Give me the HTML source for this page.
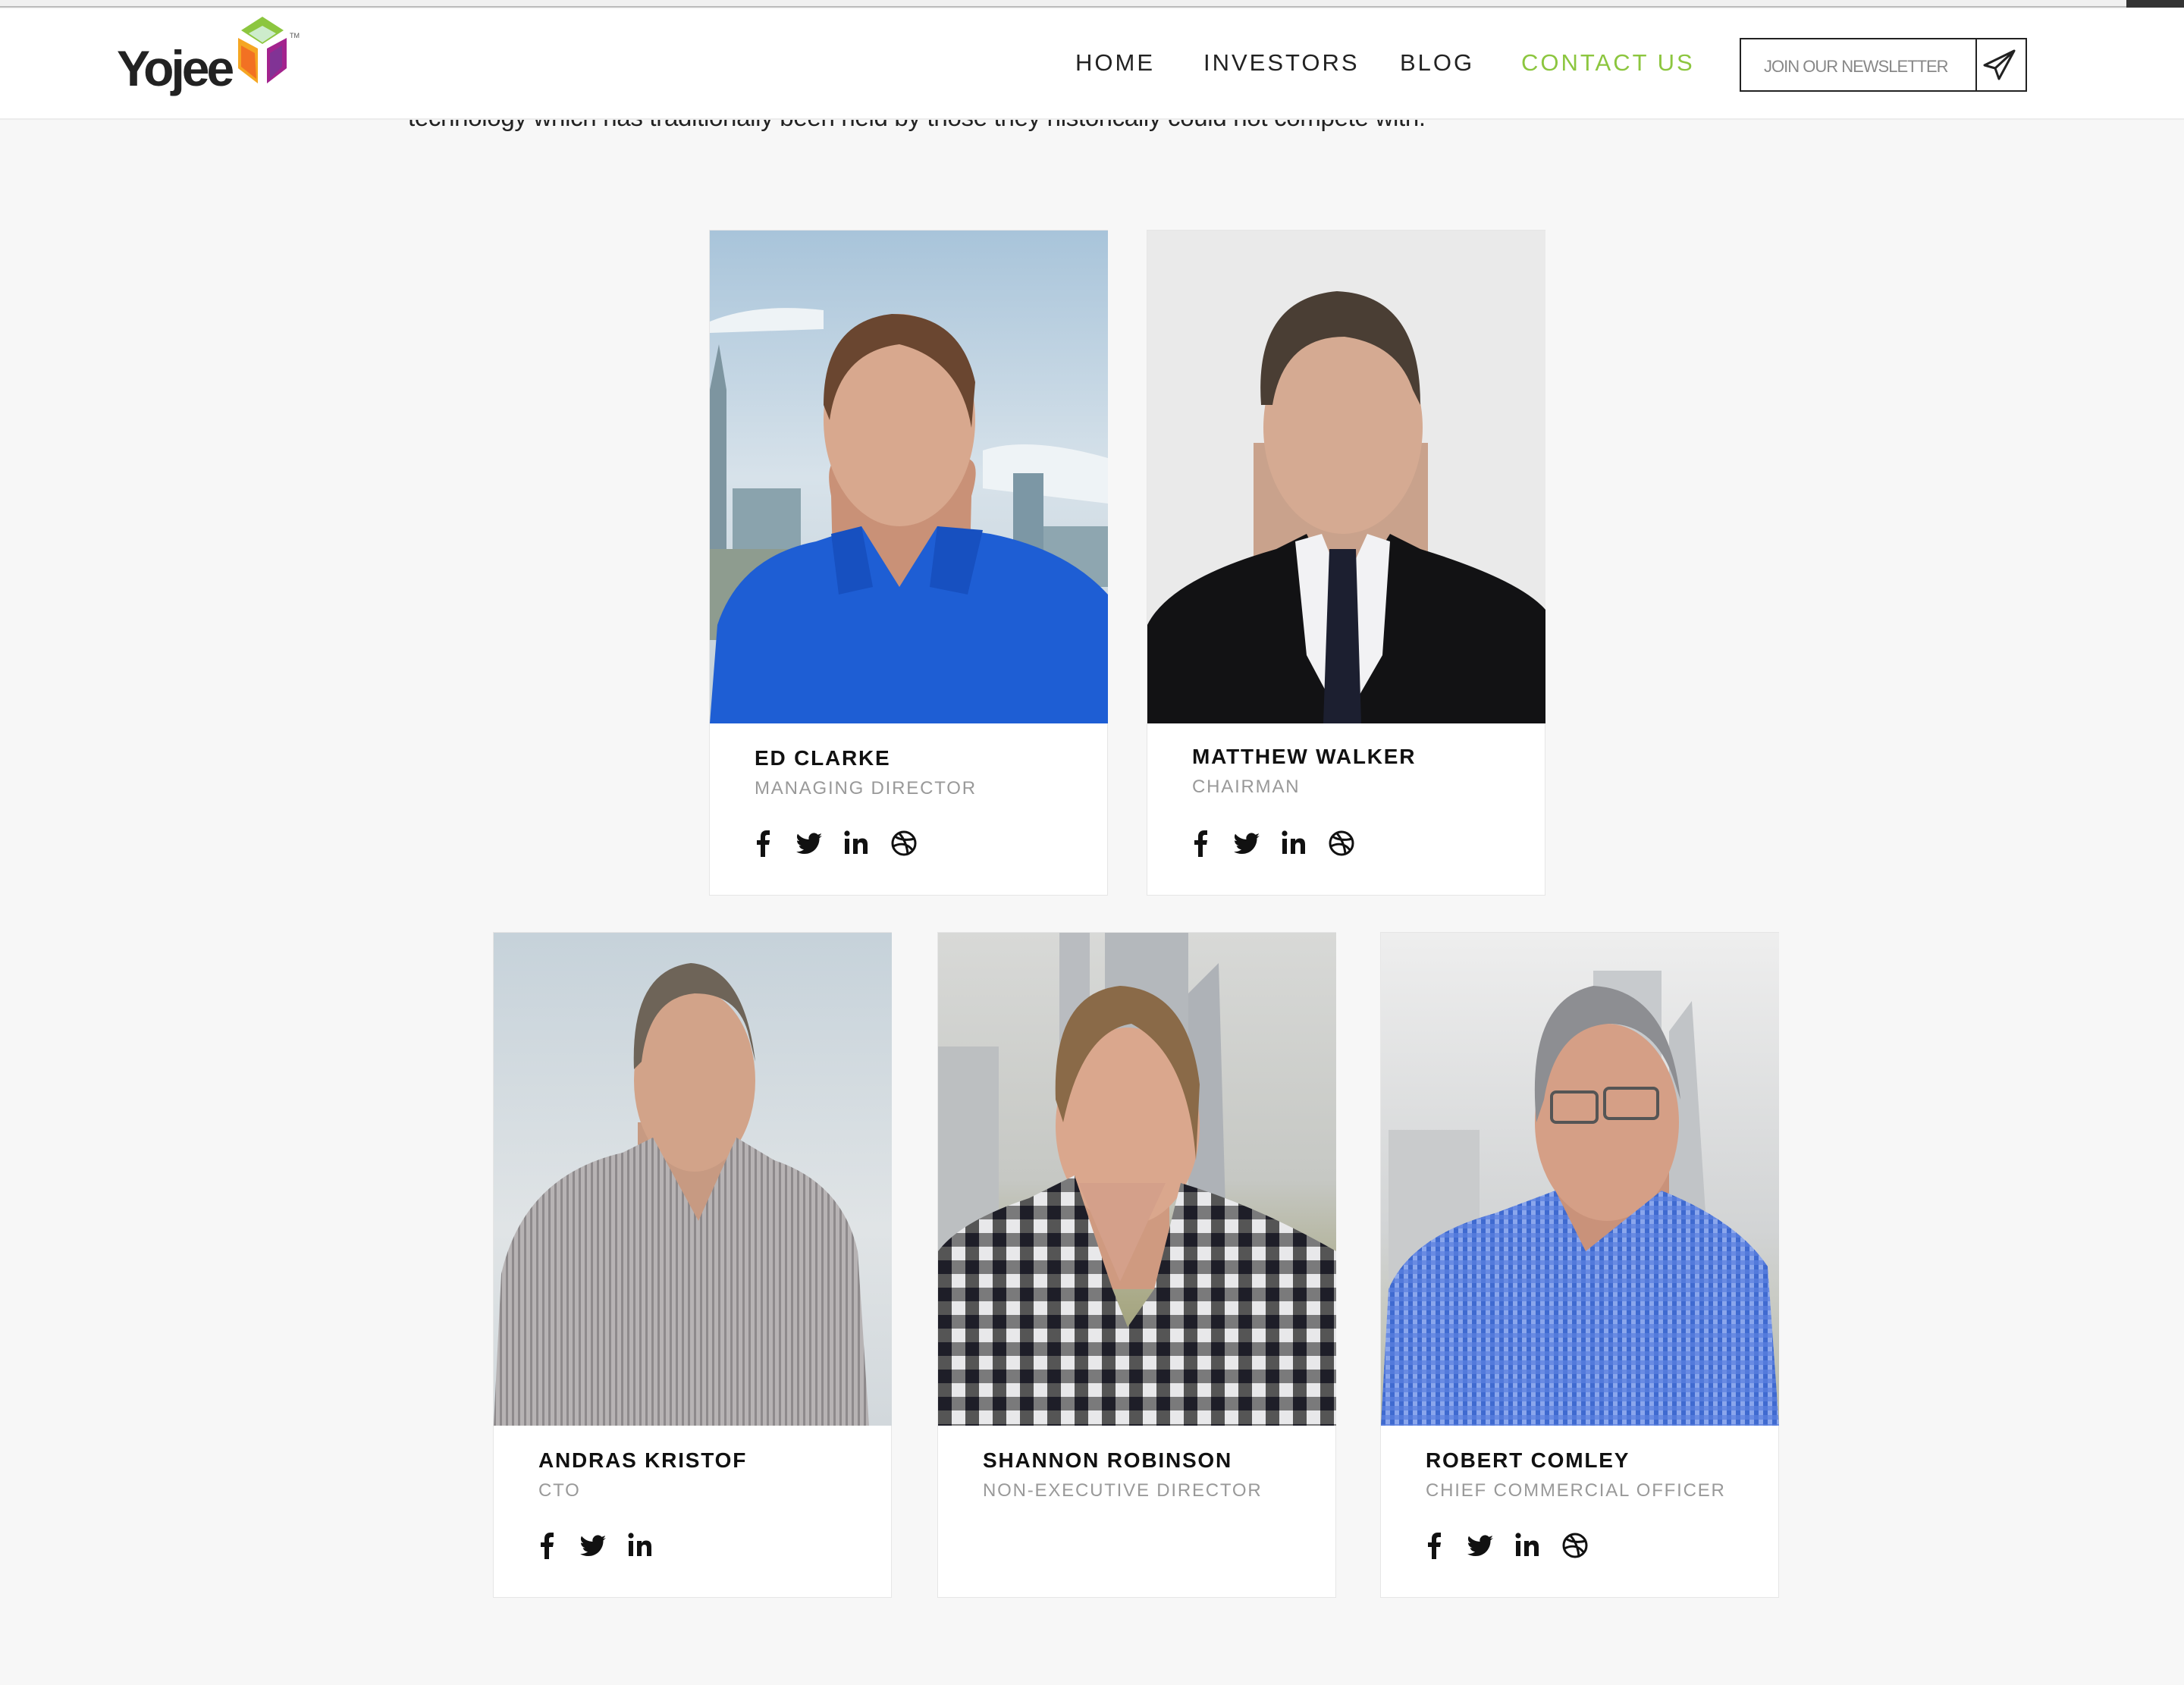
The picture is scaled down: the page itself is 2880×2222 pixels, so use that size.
<!DOCTYPE html>
<html><head><meta charset="utf-8">
<style>
*{margin:0;padding:0;box-sizing:border-box}
body{width:2880px;height:2222px;background:#f7f7f7;font-family:"Liberation Sans",sans-serif;position:relative;overflow:hidden}
.topbar{position:absolute;left:0;top:0;width:2880px;height:10px;background:#f0f0f0;border-bottom:2px solid #bbb}
.topbar i{position:absolute;right:0;top:0;width:76px;height:10px;background:#333}
header{position:absolute;left:0;top:12px;width:2880px;height:146px;background:#fff;border-bottom:2px solid #ececec;z-index:2}
.logo{position:absolute;left:154px;top:40px;font-size:66px;font-weight:bold;color:#222;letter-spacing:-4px}
nav a{position:absolute;top:53px;font-size:31px;letter-spacing:3px;color:#222;text-decoration:none}
.nl{position:absolute;left:2294px;top:38px;width:379px;height:71px;border:2px solid #222}
.nl span{position:absolute;left:30px;top:23px;font-size:22px;color:#888;letter-spacing:-1px}
.nl b{position:absolute;left:309px;top:0;width:2px;height:67px;background:#222}
.intro{position:absolute;left:538px;top:136px;font-size:33px;color:#222;white-space:nowrap;z-index:1;letter-spacing:-0.3px}
.card{position:absolute;width:526px;height:878px;background:#fff;border:1px solid #e6e6e6}
.card svg{position:absolute;left:0;top:0;width:525px;height:650px}
.nm{position:absolute;left:59px;top:680px;font-size:28px;font-weight:bold;letter-spacing:1.8px;color:#111}
.rl{position:absolute;left:59px;top:722px;font-size:24px;letter-spacing:1.8px;color:#999}
.ic{position:absolute;left:50px;top:788px;height:40px;display:flex;gap:0}
.ic svg{position:static;width:40px;height:40px;margin-right:22px}
</style></head><body>
<div class="topbar"><i></i></div>
<header>
<div class="logo">Yojee</div>
<svg style="position:absolute;left:310px;top:8px" width="90" height="95" viewBox="0 0 90 95">
<polygon points="36,2 64,20 36,38 8,20" fill="#8cc63f"/>
<polygon points="36,14 54,24 36,36 18,24" fill="#cdeccc"/>
<polygon points="4,30 30,44 30,90 4,70" fill="#f5a623"/>
<polygon points="8,40 26,50 28,84 8,68" fill="#f04e23" opacity=".6"/>
<polygon points="68,30 42,44 42,90 68,70" fill="#a3238e"/>
<polygon points="62,40 46,50 46,84 62,68" fill="#6a3d9a" opacity=".6"/>
<text x="72" y="30" font-size="9" fill="#555" font-family="Liberation Sans">TM</text>
</svg>
<nav>
<a style="left:1418px">HOME</a>
<a style="left:1587px">INVESTORS</a>
<a style="left:1846px">BLOG</a>
<a style="left:2006px;color:#8cc63f">CONTACT US</a>
</nav>
<div class="nl"><span>JOIN OUR NEWSLETTER</span><b></b>
<svg style="position:absolute;left:318px;top:12px" width="46" height="44" viewBox="0 0 46 44"><path d="M42 3 L3 22 L17 26 L22 40 Z M42 3 L17 26" fill="none" stroke="#222" stroke-width="3" stroke-linejoin="round"/></svg>
</div>
</header>
<div class="intro">technology which has traditionally been held by those they historically could not compete with.</div>

<svg width="0" height="0" style="position:absolute">
<defs>
<symbol id="fb" viewBox="0 0 40 40"><path d="M17 38V22h-5v-6h5v-5c0-5 3-8 8-8h4v6h-3c-2 0-3 1-3 3v4h6l-1 6h-5v16z" fill="#111"/></symbol>
<symbol id="tw" viewBox="0 0 40 40"><path d="M36 10c-1 .5-2.5 1-4 1 1.5-1 2.5-2.3 3-4-1.3.8-3 1.4-4.5 1.7A7 7 0 0 0 18.5 15 20 20 0 0 1 4 7.6a7 7 0 0 0 2 9.4c-1 0-2-.3-3-.8 0 3.4 2.4 6.2 5.6 6.9-1 .3-2 .3-3 .1.9 2.8 3.5 4.8 6.5 4.9A14 14 0 0 1 2 31c3 2 6.8 3 10.7 3 12.8 0 19.8-10.6 19.8-19.8v-1c1.4-1 2.6-2.2 3.5-3.2z" fill="#111"/></symbol>
<symbol id="li" viewBox="0 0 40 40"><rect x="4" y="14" width="6" height="20" fill="#111"/><circle cx="7" cy="7" r="3.6" fill="#111"/><path d="M15 14h6v3c1-2 3-3.5 6-3.5 5 0 7 3 7 8V34h-6V23c0-2.5-1-4-3.3-4S21 21 21 23.5V34h-6z" fill="#111"/></symbol>
<symbol id="dr" viewBox="0 0 40 40"><g fill="none" stroke="#111" stroke-width="3"><circle cx="20" cy="20" r="15"/><path d="M8 11c6 4 14 6 26 3M6 24c8-4 18-5 26 6M14 7c6 7 10 16 11 27"/></g></symbol>
<pattern id="chk" width="36" height="36" patternUnits="userSpaceOnUse"><rect width="36" height="36" fill="#e8e8ea"/><rect width="18" height="36" fill="#555"/><rect width="36" height="18" fill="#555" opacity=".75"/><rect width="18" height="18" fill="#1e1e28"/></pattern>
<pattern id="gch" width="12" height="12" patternUnits="userSpaceOnUse"><rect width="12" height="12" fill="#8aa6ec"/><rect width="6" height="12" fill="#3f6ad0"/><rect width="12" height="6" fill="#5b80e0" opacity=".7"/></pattern>
<pattern id="str" width="8" height="8" patternUnits="userSpaceOnUse"><rect width="8" height="8" fill="#b7b3b4"/><rect width="3" height="8" fill="#8e8a8c"/></pattern>
</defs></svg>

<!-- Ed Clarke -->
<div class="card" style="left:935px;top:303px">
<svg viewBox="0 0 525 650" preserveAspectRatio="none">
<defs><linearGradient id="sk1" x1="0" y1="0" x2="0" y2="1"><stop offset="0" stop-color="#a8c4da"/><stop offset=".5" stop-color="#d7e2ea"/><stop offset="1" stop-color="#c3cfd6"/></linearGradient></defs>
<rect width="525" height="650" fill="url(#sk1)"/>
<path d="M0 120 Q60 95 150 105 L150 130 L0 135Z" fill="#eef3f6"/>
<path d="M360 290 Q420 270 525 300 L525 360 L360 340Z" fill="#eef3f6"/>
<polygon points="0,210 12,150 22,210 22,420 0,420" fill="#7d95a0"/>
<rect x="30" y="340" width="90" height="120" fill="#8aa3ad"/>
<rect x="400" y="320" width="40" height="140" fill="#7c97a5"/>
<rect x="440" y="390" width="85" height="80" fill="#8ea6b0"/>
<rect x="0" y="420" width="150" height="120" fill="#8e9c8f"/>
<path d="M165 560 L160 350 Q150 300 175 300 L335 300 Q360 300 345 350 L340 560Z" fill="#c99177"/>
<ellipse cx="250" cy="250" rx="100" ry="140" fill="#d8a88e"/>
<path d="M150 230 Q150 120 240 110 Q330 110 350 200 L345 260 Q330 170 250 150 Q170 160 158 250Z" fill="#6a4630"/>
<path d="M0 650 L10 520 Q40 430 140 410 L200 390 L250 470 L300 390 L370 400 Q470 420 525 480 L525 650Z" fill="#1e5ed4"/>
<path d="M160 400 L200 390 L215 470 L170 480Z M300 390 L360 395 L340 480 L290 470Z" fill="#1750c0"/>
</svg>
<div class="nm">ED CLARKE</div><div class="rl">MANAGING DIRECTOR</div>
<div class="ic"><svg><use href="#fb"/></svg><svg><use href="#tw"/></svg><svg><use href="#li"/></svg><svg><use href="#dr"/></svg></div>
</div>

<!-- Matthew Walker -->
<div class="card" style="left:1512px;top:303px">
<svg viewBox="0 0 525 650" preserveAspectRatio="none">
<rect width="525" height="650" fill="#eaeaea"/>
<rect x="140" y="280" width="230" height="260" fill="#c9a28c"/>
<ellipse cx="258" cy="260" rx="105" ry="140" fill="#d5aa92"/>
<path d="M150 230 Q140 90 250 80 Q360 85 360 230 L350 210 Q330 150 260 140 Q180 140 165 230Z" fill="#4a3e34"/>
<path d="M0 650 L0 520 Q30 460 170 420 L210 400 L258 500 L320 400 L360 420 Q490 460 525 500 L525 650Z" fill="#121214"/>
<polygon points="195,410 230,400 258,470 290,400 320,410 310,560 258,650 210,560" fill="#f2f2f4"/>
<polygon points="240,420 275,420 282,650 232,650" fill="#1c1f30"/>
</svg>
<div class="nm" style="top:678px">MATTHEW WALKER</div><div class="rl" style="top:720px">CHAIRMAN</div>
<div class="ic"><svg><use href="#fb"/></svg><svg><use href="#tw"/></svg><svg><use href="#li"/></svg><svg><use href="#dr"/></svg></div>
</div>

<!-- Andras -->
<div class="card" style="left:650px;top:1229px">
<svg viewBox="0 0 525 650" preserveAspectRatio="none">
<defs><linearGradient id="sk3" x1="0" y1="0" x2="0" y2="1"><stop offset="0" stop-color="#c6d2da"/><stop offset=".6" stop-color="#e0e4e6"/><stop offset="1" stop-color="#d2d8dc"/></linearGradient></defs>
<rect width="525" height="650" fill="url(#sk3)"/>
<rect x="190" y="250" width="130" height="170" fill="#c79a82"/>
<ellipse cx="265" cy="195" rx="80" ry="120" fill="#d2a389"/>
<path d="M185 180 Q180 50 260 40 Q330 45 345 170 L335 130 Q320 80 265 80 Q205 85 195 170Z" fill="#6e6458"/>
<path d="M0 650 L10 450 Q40 320 170 290 L210 270 L270 380 L320 270 L370 300 Q460 330 480 420 L495 650Z" fill="url(#str)"/>
</svg>
<div class="nm">ANDRAS KRISTOF</div><div class="rl">CTO</div>
<div class="ic"><svg><use href="#fb"/></svg><svg><use href="#tw"/></svg><svg><use href="#li"/></svg></div>
</div>

<!-- Shannon -->
<div class="card" style="left:1236px;top:1229px">
<svg viewBox="0 0 525 650" preserveAspectRatio="none">
<defs><linearGradient id="sk4" x1="0" y1="0" x2="0" y2="1"><stop offset="0" stop-color="#d8d9d7"/><stop offset=".5" stop-color="#c6c8c4"/><stop offset=".75" stop-color="#a9a986"/><stop offset="1" stop-color="#8b8c66"/></linearGradient></defs>
<rect width="525" height="650" fill="url(#sk4)"/>
<rect x="160" y="0" width="40" height="280" fill="#b9bcc0"/>
<rect x="220" y="0" width="110" height="280" fill="#b4b8bc"/>
<polygon points="330,80 370,40 380,400 330,400" fill="#aeb2b7"/>
<rect x="0" y="150" width="80" height="280" fill="#bcbfc1"/>
<rect x="185" y="330" width="120" height="140" fill="#cf9a80"/>
<ellipse cx="250" cy="255" rx="95" ry="130" fill="#daa78d"/>
<path d="M155 220 Q150 80 240 70 Q330 75 345 200 L340 300 Q330 160 255 120 Q190 130 165 250Z" fill="#8a6a48"/>
<path d="M0 650 L0 420 Q30 380 120 350 L180 320 L230 470 L250 520 L285 470 L320 330 Q420 360 525 420 L525 650Z" fill="url(#chk)"/>
<path d="M185 330 L240 460 L300 330 Z" fill="#d4a08a"/>
</svg>
<div class="nm">SHANNON ROBINSON</div><div class="rl">NON-EXECUTIVE DIRECTOR</div>
</div>

<!-- Robert -->
<div class="card" style="left:1820px;top:1229px">
<svg viewBox="0 0 525 650" preserveAspectRatio="none">
<defs><linearGradient id="sk5" x1="0" y1="0" x2="0" y2="1"><stop offset="0" stop-color="#eeeeee"/><stop offset=".6" stop-color="#d2d4d5"/><stop offset="1" stop-color="#b9bba8"/></linearGradient></defs>
<rect width="525" height="650" fill="url(#sk5)"/>
<rect x="280" y="50" width="90" height="380" fill="#c7cacd"/>
<polygon points="380,130 410,90 430,400 380,400" fill="#c1c4c7"/>
<rect x="10" y="260" width="120" height="200" fill="#c9cbcc"/>
<rect x="230" y="280" width="150" height="160" fill="#c9927a"/>
<ellipse cx="298" cy="250" rx="95" ry="130" fill="#d59f86"/>
<path d="M205 250 Q190 90 280 70 Q380 75 395 220 L385 190 Q360 120 300 120 Q230 125 215 220Z" fill="#8d8e92"/>
<rect x="225" y="210" width="60" height="40" rx="6" fill="none" stroke="#555" stroke-width="4"/>
<rect x="295" y="205" width="70" height="40" rx="6" fill="none" stroke="#555" stroke-width="4"/>
<path d="M0 650 L10 470 Q40 400 150 370 L230 340 L270 420 L370 340 Q470 380 510 440 L525 650Z" fill="url(#gch)"/>
</svg>
<div class="nm">ROBERT COMLEY</div><div class="rl">CHIEF COMMERCIAL OFFICER</div>
<div class="ic"><svg><use href="#fb"/></svg><svg><use href="#tw"/></svg><svg><use href="#li"/></svg><svg><use href="#dr"/></svg></div>
</div>
</body></html>
